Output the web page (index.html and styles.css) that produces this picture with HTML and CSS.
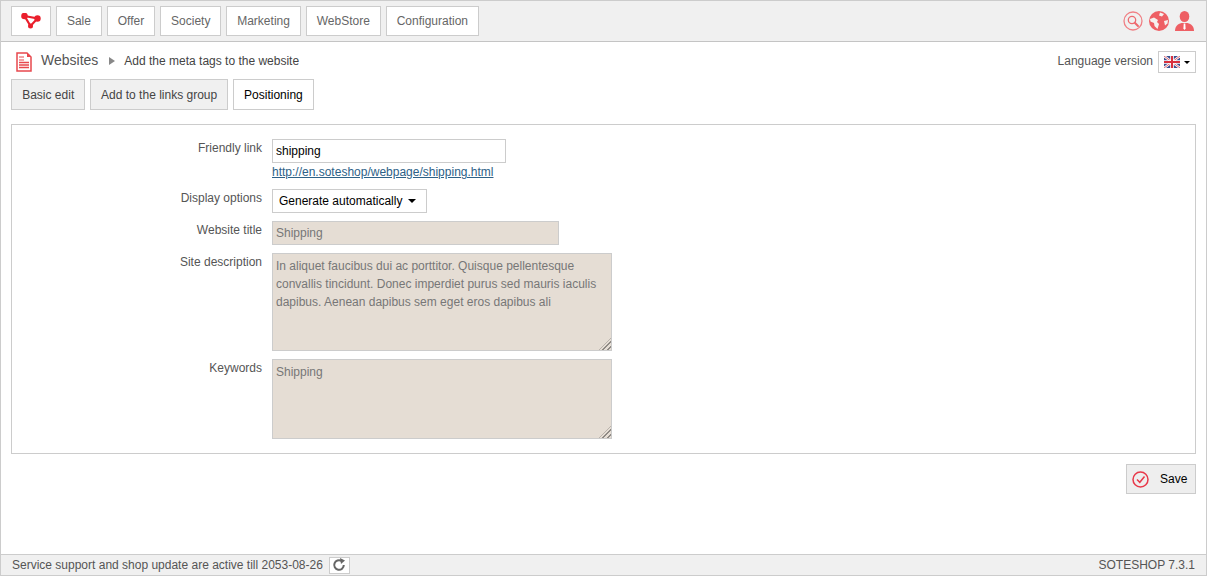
FILE: index.html
```html
<!DOCTYPE html>
<html lang="en">
<head>
<meta charset="utf-8">
<title>Websites</title>
<link rel="stylesheet" href="styles.css">
</head>
<body>
<div class="app">
  <header class="topbar">
    <nav class="menu">
      <a class="menu-btn logo-btn"><svg width="20" height="16" viewBox="0 0 20 16"><path d="M3.500 3 L16.500 5.500 L9.500 13 Z" fill="none" stroke="#ea1f2c" stroke-width="2.200"/><circle cx="3.500" cy="3" r="3.300" fill="#ea1f2c"/><circle cx="16.500" cy="5.500" r="3.200" fill="#ea1f2c"/><circle cx="9.500" cy="13" r="2.500" fill="#ea1f2c"/></svg></a>
      <a class="menu-btn">Sale</a>
      <a class="menu-btn">Offer</a>
      <a class="menu-btn">Society</a>
      <a class="menu-btn">Marketing</a>
      <a class="menu-btn">WebStore</a>
      <a class="menu-btn">Configuration</a>
    </nav>
    <div class="top-icons">
      <svg width="20" height="20" viewBox="0 0 20 20"><circle cx="10" cy="10" r="9" fill="none" stroke="#f08085" stroke-width="1.300"/><circle cx="9" cy="9" r="3.700" fill="none" stroke="#ee6a6f" stroke-width="1.300"/><path d="M11.800 11.800 L15 15" stroke="#ee6a6f" stroke-width="2" stroke-linecap="round"/></svg>
      <svg width="20" height="20" viewBox="0 0 20 20"><circle cx="10" cy="10" r="10" fill="#ee5f64"/><path d="M1 8 L5 6.500 L9 9 L8 11 L10 13 L8.500 18 L5.500 15 L5 12 L1.500 10.500 Z M11 1.500 L15 3 L13 5.500 L10 4.500 Z M15 10 L19 9 L18.500 12.500 L16 14.500 Z" fill="#f6f0ee"/></svg>
      <svg width="19" height="20" viewBox="0 0 19 20"><ellipse cx="9.500" cy="5.500" rx="4.800" ry="5.500" fill="#ee5f64"/><path d="M0 20 C0 15.500 2.500 13 6.500 12 L12.500 12 C16.500 13 19 15.500 19 20 Z" fill="#ee5f64"/><path d="M8.700 12.500 L10.300 12.500 L10.600 17.500 L9.500 19 L8.400 17.500 Z" fill="#fff"/></svg>
    </div>
  </header>

  <main class="content">
    <div class="crumb-row">
      <div class="crumbs">
        <svg class="page-icon" width="16" height="20" viewBox="0 0 16 20"><path d="M1 1 H11 L15 5 V19 H1 Z" fill="#fff" stroke="#e8484e" stroke-width="1.500"/><path d="M11 1 V5 H15 Z" fill="#e8484e"/><path d="M3 5 H8 M3 8 H8" stroke="#e8484e"/><path d="M3 10.500 H13 M3 13 H13 M3 15.500 H13" stroke="#e8484e" stroke-width="1.600"/></svg>
        <span class="crumb-title">Websites</span>
        <span class="crumb-arrow"></span>
        <span class="crumb-sub">Add the meta tags to the website</span>
      </div>
      <div class="lang">
        <span class="lang-label">Language version</span>
        <span class="lang-btn">
          <svg width="16" height="12" viewBox="0 0 16 12"><rect width="16" height="12" rx="2" fill="#3d4f8f"/><path d="M0 0 L16 12 M16 0 L0 12" stroke="#fff" stroke-width="2.400"/><path d="M0 0 L16 12 M16 0 L0 12" stroke="#d8404e" stroke-width="0.800"/><path d="M8 0 V12 M0 6 H16" stroke="#fff" stroke-width="3.600"/><path d="M8 0 V12 M0 6 H16" stroke="#d8303e" stroke-width="2"/></svg>
          <span class="caret"></span>
        </span>
      </div>
    </div>

    <div class="tabs">
      <a class="tab">Basic edit</a>
      <a class="tab">Add to the links group</a>
      <a class="tab tab-active">Positioning</a>
    </div>

    <form class="panel">
      <div class="row row-link">
        <label class="label">Friendly link</label>
        <div class="field">
          <input class="input input-link" type="text" value="shipping">
          <a class="link">http://en.soteshop/webpage/shipping.html</a>
        </div>
      </div>
      <div class="row row-display">
        <label class="label">Display options</label>
        <div class="field"><span class="select">Generate automatically<span class="caret select-caret"></span></span></div>
      </div>
      <div class="row row-title">
        <label class="label">Website title</label>
        <div class="field"><input class="input input-title" type="text" value="Shipping" disabled></div>
      </div>
      <div class="row row-desc">
        <label class="label">Site description</label>
        <div class="field area-wrap"><textarea class="area area-desc" disabled>In aliquet faucibus dui ac porttitor. Quisque pellentesque convallis tincidunt. Donec imperdiet purus sed mauris iaculis dapibus. Aenean dapibus sem eget eros dapibus ali</textarea></div>
      </div>
      <div class="row">
        <label class="label">Keywords</label>
        <div class="field area-wrap"><textarea class="area area-keys" disabled>Shipping</textarea></div>
      </div>
    </form>

    <div class="actions">
      <a class="save">
        <svg width="17" height="17" viewBox="0 0 17 17"><circle cx="8.500" cy="8.500" r="7.500" fill="none" stroke="#e8394a" stroke-width="1.500"/><path d="M5 8.500 L7.800 11.300 L12.500 5.500" fill="none" stroke="#e8394a" stroke-width="1.500"/></svg>
        <span>Save</span>
      </a>
    </div>
  </main>

  <footer class="footer">
    <div class="footer-left">
      <span>Service support and shop update are active till 2053-08-26</span>
      <span class="refresh"><svg width="14" height="14" viewBox="0 0 14 14"><path d="M11.800 7 A4.800 4.800 0 1 1 9.500 2.900" fill="none" stroke="#666" stroke-width="2"/><path d="M8 0 L13 2.500 L9 6 Z" fill="#666"/></svg></span>
    </div>
    <span class="version">SOTESHOP 7.3.1</span>
  </footer>
</div>
</body>
</html>
```
FILE: styles.css
```css
* { box-sizing: border-box; }
html, body { margin: 0; height: 100%; }
body {
  font-family: "Liberation Sans", Arial, sans-serif;
  font-size: 12px;
  color: #555;
  background: #fff;
}
.app {
  height: 576px;
  display: flex;
  flex-direction: column;
  border: 1px solid #ccc;
  border-bottom: 0;
  border-top: 0;
}
.topbar {
  height: 42px;
  background: #f0f0f0;
  border-top: 1px solid #ccc;
  border-bottom: 1px solid #c4c4c4;
  padding: 5px 12px 0 10px;
  display: flex;
  justify-content: space-between;
}
.menu { display: flex; gap: 5px; }
.menu-btn {
  height: 30px;
  padding: 0 9.920px;
  display: flex;
  align-items: center;
  background: #fff;
  border: 1px solid #ccc;
  color: #666;
}
.logo-btn { width: 40px; justify-content: center; padding: 0; }
.top-icons { display: flex; gap: 6px; padding-top: 5px; }
.content { flex: 1; padding: 0 10px; }
.crumb-row {
  display: flex;
  justify-content: space-between;
  height: 37px;
  padding-top: 9px;
}
.crumbs { display: flex; align-items: flex-start; padding-left: 5px; }
.page-icon { margin-top: 1px; }
.crumb-title { font-size: 14px; line-height: 18px; margin-left: 9px; color: #555; }
.crumb-arrow {
  width: 0; height: 0;
  margin: 6px 0 0 10.500px;
  border-left: 6.500px solid #888;
  border-top: 4px solid transparent;
  border-bottom: 4px solid transparent;
}
.crumb-sub { line-height: 20px; margin-left: 9.500px; color: #444; }
.lang { display: flex; gap: 5px; align-items: flex-start; color: #555; line-height: 20px; }
.lang-btn {
  width: 38px;
  height: 22px;
  border: 1px solid #ccc;
  background: #fff;
  display: flex;
  align-items: center;
  justify-content: center;
  gap: 4px;
}
.caret {
  width: 0; height: 0;
  border-top: 3.500px solid #000;
  border-left: 3.500px solid transparent;
  border-right: 3.500px solid transparent;
}
.tabs { display: flex; gap: 4.500px; }
.tab {
  height: 31px;
  padding: 0 10.200px;
  display: flex;
  align-items: center;
  background: #f0f0f0;
  border: 1px solid #ccc;
  color: #444;
}
.tab-active { background: #fff; color: #000; }
.panel {
  margin-top: 14px;
  height: 330px;
  border: 1px solid #ccc;
  padding-top: 14px;
  display: flex;
  flex-direction: column;
}
.row { display: flex; align-items: flex-start; }
.row-link { height: 50px; }
.row-display { height: 32px; }
.row-title { height: 32px; }
.row-desc { height: 106px; }
.label {
  width: 250px;
  text-align: right;
  line-height: 18px;
  color: #555;
}
.field { margin-left: 10px; display: flex; flex-direction: column; align-items: flex-start; }
.input {
  height: 24px;
  padding: 0 3px;
  border: 1px solid #ccc;
  background: #fff;
  color: #000;
  font: 12px "Liberation Sans", Arial, sans-serif;
  outline: none;
}
.input-link { width: 234px; }
.input-title { width: 287px; background: #e5ddd4; color: #777; }
.link { color: #2d6187; text-decoration: underline; line-height: 18px; }
.select {
  height: 24px;
  width: 155px;
  padding: 0 6px;
  border: 1px solid #ccc;
  background: #fff;
  color: #000;
  display: flex;
  align-items: center;
}
.select-caret { margin-left: 6px; border-top-width: 4px; border-left-width: 4px; border-right-width: 4px; }
.area-wrap { position: relative; }
.area-wrap::after {
  content: "";
  position: absolute;
  right: 1px;
  bottom: 1px;
  width: 12px;
  height: 12px;
  background: repeating-linear-gradient(135deg, transparent 0 1.500px, #8f8a85 1.500px 3px);
  clip-path: polygon(100% 0, 100% 100%, 0 100%);
}
.area {
  display: block;
  width: 340px;
  padding: 3px;
  border: 1px solid #ccc;
  background: #e5ddd4;
  color: #777;
  font: 12px/18px "Liberation Sans", Arial, sans-serif;
  outline: none;
  resize: none;
  margin: 0;
}
.area-desc { height: 98px; }
.area-keys { height: 80px; }
.actions { display: flex; justify-content: flex-end; margin-top: 10px; }
.save {
  width: 70px;
  height: 30px;
  display: flex;
  align-items: center;
  padding-left: 5px;
  gap: 11px;
  background: #eee;
  border: 1px solid #ccc;
  color: #000;
}
.footer {
  height: 22px;
  background: #f0f0f0;
  border-top: 1px solid #ccc;
  border-bottom: 1px solid #ccc;
  padding: 0 11px 0 11px;
  display: flex;
  align-items: center;
  justify-content: space-between;
  color: #555;
}
.footer-left { display: flex; align-items: center; gap: 6px; }
.refresh {
  width: 21px;
  height: 17px;
  background: #fff;
  border: 1px solid #ccc;
  display: flex;
  align-items: center;
  justify-content: center;
}
```
